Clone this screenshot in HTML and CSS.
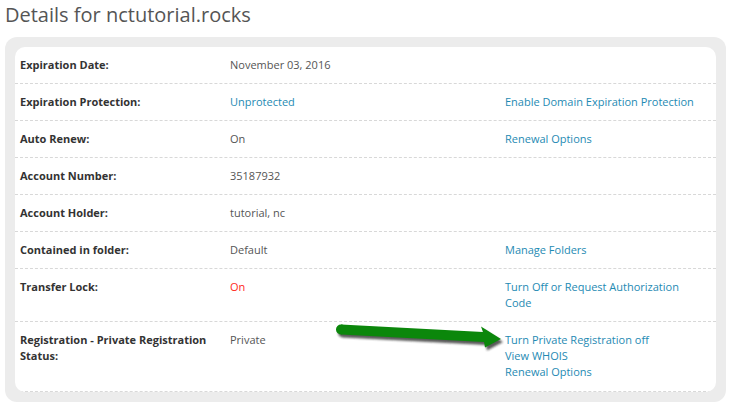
FILE: index.html
```html
<!DOCTYPE html>
<html>
<head>
<meta charset="utf-8">
<link rel="stylesheet" href="styles.css">
</head>
<body>
<div class="page">
  <h1 class="title">Details for nctutorial.rocks</h1>
  <div class="outer">
    <div class="inner">
      <div class="row">
        <div class="label">Expiration Date:</div>
        <div class="value">November 03, 2016</div>
        <div class="action"></div>
      </div>
      <div class="row">
        <div class="label">Expiration Protection:</div>
        <div class="value"><a class="link">Unprotected</a></div>
        <div class="action"><a class="link">Enable Domain Expiration Protection</a></div>
      </div>
      <div class="row">
        <div class="label">Auto Renew:</div>
        <div class="value">On</div>
        <div class="action"><a class="link">Renewal Options</a></div>
      </div>
      <div class="row">
        <div class="label">Account Number:</div>
        <div class="value">35187932</div>
        <div class="action"></div>
      </div>
      <div class="row">
        <div class="label">Account Holder:</div>
        <div class="value">tutorial, nc</div>
        <div class="action"></div>
      </div>
      <div class="row">
        <div class="label">Contained in folder:</div>
        <div class="value">Default</div>
        <div class="action"><a class="link">Manage Folders</a></div>
      </div>
      <div class="row">
        <div class="label">Transfer Lock:</div>
        <div class="value red">On</div>
        <div class="action"><a class="link">Turn Off or Request Authorization Code</a></div>
      </div>
      <div class="row last">
        <div class="label">Registration - Private Registration Status:</div>
        <div class="value">Private</div>
        <div class="action">
          <a class="link block">Turn Private Registration off</a>
          <a class="link block">View WHOIS</a>
          <a class="link block">Renewal Options</a>
        </div>
      </div>
    </div>
  </div>
  <svg class="arrow" width="731" height="406" viewBox="0 0 731 406">
    <defs>
      <filter id="blur" x="-10%" y="-50%" width="120%" height="200%">
        <feGaussianBlur stdDeviation="1.3"/>
      </filter>
    </defs>
    <g transform="translate(2,3)" fill="#222" opacity="0.75" filter="url(#blur)">
      <circle cx="341" cy="329.5" r="5"/>
      <polygon points="341,324.5 483,332 481,326.5 501,339 485,347.5 484,342 341,334.5"/>
    </g>
    <g fill="#0b870b">
      <circle cx="341" cy="329.5" r="5"/>
      <polygon points="341,324.5 483,332 481,326.5 501,339 485,347.5 484,342 341,334.5"/>
    </g>
  </svg>
</div>
</body>
</html>
```
FILE: styles.css
```css
html, body {
  margin: 0;
  padding: 0;
  background: #ffffff;
}
.page {
  position: relative;
  width: 731px;
  height: 406px;
  font-family: "Open Sans", "Liberation Sans", sans-serif;
  overflow: hidden;
}
.title {
  margin: 0;
  padding: 2px 0 0 5px;
  height: 37px;
  box-sizing: border-box;
  font-size: 20px;
  line-height: 26px;
  font-weight: 400;
  color: #555555;
}
.outer {
  margin: 0 5px;
  width: 721px;
  box-sizing: border-box;
  padding: 10px;
  background: #ececec;
  border-radius: 12px;
}
.inner {
  background: #ffffff;
  border-radius: 10px;
  overflow: hidden;
}
.row {
  display: grid;
  grid-template-columns: 210px 275px 1fr;
  padding: 10px 0 10px 5px;
  border-bottom: 1px dashed #d8d8d8;
  font-size: 11px;
  line-height: 16px;
  color: #555555;
}
.row.last {
  padding-bottom: 11px;
}
.label {
  font-weight: 700;
  color: #333333;
  padding-right: 14px;
}
.value.red {
  color: #ff2a1a;
}
.action {
  padding-right: 20px;
}
.link {
  color: #1e8ab3;
  text-decoration: none;
}
.block {
  display: block;
}
.arrow {
  position: absolute;
  left: 0;
  top: 0;
  pointer-events: none;
}
```
